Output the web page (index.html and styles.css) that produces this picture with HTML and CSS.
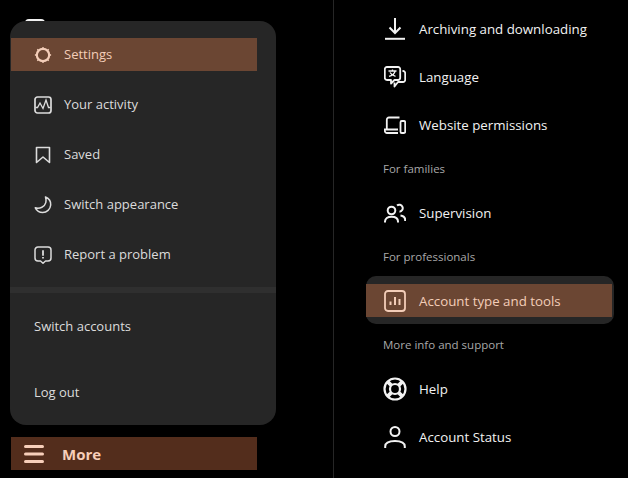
FILE: index.html
```html
<!DOCTYPE html>
<html lang="en">
<head>
<meta charset="utf-8">
<title>More menu</title>
<link rel="stylesheet" href="styles.css">
</head>
<body>
<div class="page">
  <aside class="left">
    <span class="avatar-tip"></span>
    <nav class="panel">
      <a class="mitem active">
        <svg class="mi" viewBox="0 0 18 18"><circle cx="9" cy="9" r="6.200" fill="none" stroke="currentColor" stroke-width="2.200"/><path d="M9 .9v2M9 15.100v2M.9 9h2M15.100 9h2M3.300 3.300l1.300 1.300M13.400 13.400l1.300 1.300M14.700 3.300l-1.300 1.300M4.600 13.400l-1.300 1.300" stroke="currentColor" stroke-width="1.300"/></svg>
        <span>Settings</span>
      </a>
      <a class="mitem">
        <svg class="mi" viewBox="0 0 18 18" fill="none" stroke="currentColor"><rect x="1" y="1" width="16" height="16" rx="2.500" stroke-width="1.700"/><path d="M1.500 11.500h2L6 7l3 5.500L12 4l2.500 7.500h2" stroke-width="1.300"/></svg>
        <span>Your activity</span>
      </a>
      <a class="mitem">
        <svg class="mi" viewBox="0 0 18 18" fill="none" stroke="currentColor"><path d="M2.500 1.500h13v15L9 11l-6.500 5.500z" stroke-width="1.600" stroke-linejoin="round"/></svg>
        <span>Saved</span>
      </a>
      <a class="mitem">
        <svg class="mi" viewBox="0 0 18 18" fill="none" stroke="currentColor"><path d="M11.500 1c3.500 1.500 5.500 4.500 5.200 8-.4 4.300-3.900 7.500-8 7.500-3.300 0-6-1.800-7.400-4.700 4.700 1.200 9.400-1 10.500-5.200.4-2 .3-3.800-.3-5.600z" stroke-width="1.500" stroke-linejoin="round"/></svg>
        <span>Switch appearance</span>
      </a>
      <a class="mitem">
        <svg class="mi" viewBox="0 0 18 18" fill="none" stroke="currentColor"><path d="M4 1h10a3 3 0 0 1 3 3v8a3 3 0 0 1-3 3h-2.500L9 17.300 6.500 15H4a3 3 0 0 1-3-3V4a3 3 0 0 1 3-3z" stroke-width="1.500" stroke-linejoin="round"/><path d="M9 4.200v5.600M9 11v1.500" stroke-width="1.800"/></svg>
        <span>Report a problem</span>
      </a>
      <div class="rule"></div>
      <a class="plain switch">Switch accounts</a>
      <a class="plain logout">Log out</a>
    </nav>
    <a class="more">
      <svg class="burger" viewBox="0 0 20 18" fill="none" stroke="currentColor" stroke-width="3" stroke-linecap="round"><path d="M1.500 1.500h17M1.500 9h17M1.500 16.500h17"/></svg>
      <span>More</span>
    </a>
  </aside>
  <main class="right">
    <a class="ritem first">
      <svg class="ri" viewBox="0 0 22 22" fill="none" stroke="currentColor" stroke-width="2"><path d="M11 0v15M5.500 9.500 11 15l5.500-5.500"/><path d="M1 20.800h20"/></svg>
      <span>Archiving and downloading</span>
    </a>
    <a class="ritem">
      <svg class="ri" viewBox="0 0 22 22" fill="none" stroke="currentColor" stroke-width="1.800" stroke-linejoin="round"><path d="M3 1h11a2.200 2.200 0 0 1 2.200 2.200v8.600A2.200 2.200 0 0 1 14 14h-3.500L7 17.500V14H3a2.200 2.200 0 0 1-2.200-2.200V3.200A2.200 2.200 0 0 1 3 1z"/><path d="M18.500 5h.5a2.200 2.200 0 0 1 2.200 2.200v6.600A2.200 2.200 0 0 1 19 16h-5l-3.500 4.500V16.500"/><path d="M4.500 5h8M8.500 3.500V5M11 5.500c-.8 2.500-3 4-6 4.800M6 6.500c1 1.800 3 3 5.500 3.800" stroke-width="1.300"/></svg>
      <span>Language</span>
    </a>
    <a class="ritem">
      <svg class="ri" viewBox="0 0 22 22" fill="none" stroke="currentColor" stroke-width="1.800"><path d="M15.500 3.500H5a2.200 2.200 0 0 0-2.200 2.200V15"/><path d="M14 19H3a2.200 2.200 0 0 1-2.200-2.200V15.500H14"/><rect x="16.500" y="7" width="4.700" height="12" rx="1.300"/></svg>
      <span>Website permissions</span>
    </a>
    <h3 class="label families">For families</h3>
    <a class="ritem">
      <svg class="ri" viewBox="0 0 22 22" fill="none" stroke="currentColor" stroke-width="2"><circle cx="7.500" cy="8.500" r="3.800"/><path d="M1 20.500v-1c0-3 2.600-4.800 6.500-4.800s6.500 1.800 6.500 4.800v1"/><path d="M13 3.500a3.500 3.500 0 1 1 2.500 6.200M16.500 13.500c3 .4 4.700 2 4.700 4.500v1"/></svg>
      <span>Supervision</span>
    </a>
    <h3 class="label pros">For professionals</h3>
    <div class="halo">
      <a class="ritem active">
        <svg class="ri" viewBox="0 0 22 22" fill="none" stroke="currentColor"><rect x="1" y="1" width="20" height="20" rx="3" stroke-width="1.800"/><path d="M6.500 11.500V15M11 7v8M15.500 9v6" stroke-width="2"/></svg>
        <span>Account type and tools</span>
      </a>
    </div>
    <h3 class="label info">More info and support</h3>
    <a class="ritem">
      <svg class="ri help" viewBox="0 0 24 24" fill="none" stroke="currentColor"><circle cx="12" cy="12" r="10.500" stroke-width="2.200"/><circle cx="12" cy="12" r="5" stroke-width="2.200"/><path d="M4.800 4.800l3.700 3.700M19.200 4.800l-3.700 3.700M4.800 19.200l3.700-3.700M19.200 19.200l-3.700-3.700" stroke-width="3.800"/></svg>
      <span>Help</span>
    </a>
    <a class="ritem">
      <svg class="ri" viewBox="0 0 22 22" fill="none" stroke="currentColor" stroke-width="2"><circle cx="11" cy="5.500" r="4.500"/><path d="M1.200 22v-1.500c0-3.700 3.200-5.500 9.800-5.500s9.800 1.800 9.800 5.500V22"/></svg>
      <span>Account Status</span>
    </a>
  </main>
</div>
</body>
</html>
```
FILE: styles.css
```css
* { box-sizing: border-box; }
html, body { margin: 0; height: 100%; background: #000; }
body { font-family: "Open Sans", "Noto Sans", sans-serif; overflow: hidden; }
a { display: flex; align-items: center; color: inherit; text-decoration: none; }

.page { display: flex; width: 628px; height: 478px; }

.left { width: 333px; padding: 21px 0 0 10px; flex: none; position: relative; }
.avatar-tip { position: absolute; left: 25px; top: 19px; width: 20px; height: 4px; border-radius: 10px 10px 0 0; background: #f2f2f2; }
.panel { position: relative; width: 266px; height: 404px; background: #262626; border-radius: 16px; padding-top: 17px; color: #dcdcdc; font-size: 13px; }

.mitem { height: 33px; margin: 0 19px 17px 1px; padding-left: 23px; gap: 12px; }
.mitem span { padding-bottom: 2px; }
.mitem.active { background: #6b4633; color: #f3cdb8; }
.mi { width: 18px; height: 18px; flex: none; }

.rule { height: 6px; margin-top: -1px; background: #2f2f2f; }
.plain { padding-left: 24px; height: 20px; }
.switch { margin-top: 23px; }
.logout { margin-top: 46px; }

.more { width: 246px; height: 33px; margin: 12px 0 0 1px; padding-left: 13px; gap: 18px; background: #532d1c; color: #f7cfba; font-size: 15px; font-weight: 700; }
.burger { width: 20px; height: 18px; flex: none; }

.right { flex: 1; border-left: 1px solid #262626; padding-top: 5px; color: #f2f2f2; font-size: 13.300px; }
.ritem { height: 48px; padding-left: 50px; gap: 13px; }
.ri { width: 22px; height: 22px; flex: none; }
.help { width: 24px; height: 24px; margin-left: -1px; margin-right: -1px; }

.label { margin: 0; height: 20px; padding-left: 49px; color: #a8a8a8; font-size: 11.500px; font-weight: 400; line-height: 20px; }
.families { margin-top: 10px; margin-bottom: 10px; }
.pros { margin-top: 10px; }
.info { margin-top: 11px; margin-bottom: 10px; }

.halo { width: 248px; height: 48px; margin: 9px 0 0 32px; padding-top: 8px; background: #262626; border-radius: 10px; }
.halo .ritem { height: 33px; width: 246px; padding-left: 18px; background: #6b4633; color: #f3cdb8; }
```
